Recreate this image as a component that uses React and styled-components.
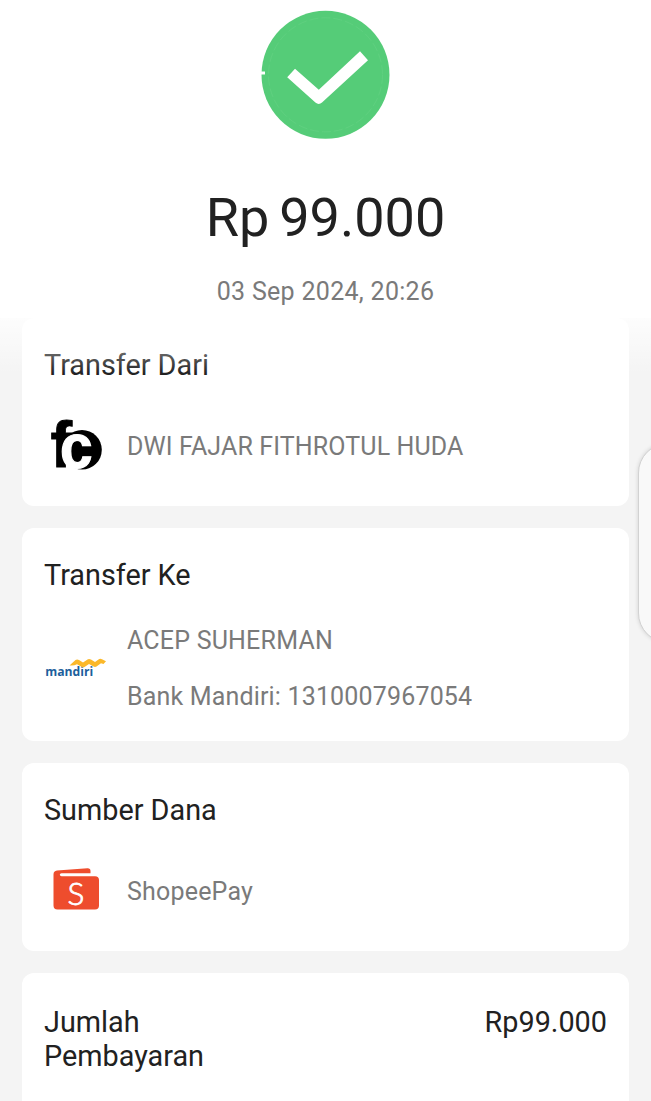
import React from 'react';
import styled, { createGlobalStyle } from 'styled-components';

const GlobalStyle = createGlobalStyle`
  body {
    margin: 0;
    background: #f4f4f4;
    font-family: Roboto, 'Liberation Sans', sans-serif;
  }
  * {
    box-sizing: border-box;
  }
`;

const Page = styled.div`
  position: relative;
  height: 1101px;
  overflow: hidden;
  background: #f4f4f4;
`;

const Header = styled.header`
  display: flex;
  flex-direction: column;
  align-items: center;
  height: 318px;
  padding-top: 10px;
  background: #fff;
`;

const Amount = styled.h1`
  margin: 46px 0 0;
  font-size: 54px;
  font-weight: 400;
  line-height: 64px;
  word-spacing: -3.5px;
  color: #212121;
  white-space: nowrap;
`;

const DateText = styled.div`
  margin-top: 27px;
  font-size: 25px;
  line-height: 30px;
  letter-spacing: 0.3px;
  color: #7a7a7a;
`;

const Cards = styled.main`
  display: flex;
  flex-direction: column;
  gap: 22px;
  padding: 0 22px;
`;

const Card = styled.section`
  height: ${(props) => props.$height}px;
  padding: 30px 22px 0;
  border-radius: 12px;
  background: #fff;
`;

const Title = styled.h2`
  margin: 0;
  font-size: 28.8px;
  font-weight: 400;
  line-height: 34px;
  color: #212121;
`;

const Row = styled.div`
  display: flex;
  align-items: center;
  gap: 19px;
  height: ${(props) => props.$height}px;
  margin-top: ${(props) => props.$top}px;
`;

const Logo = styled.svg`
  display: block;
  flex: none;
  width: 64px;
  height: 64px;
  overflow: visible;
`;

const Lines = styled.div`
  display: flex;
  flex-direction: column;
  gap: 26px;
  padding-top: ${(props) => props.$top}px;
`;

const Line = styled.div`
  font-size: 25px;
  line-height: 30px;
  letter-spacing: ${(props) => props.$spacing || 0.12}px;
  color: #7a7a7a;
  white-space: nowrap;
`;

const Total = styled.div`
  display: flex;
  justify-content: space-between;
  margin-top: 2px;
`;

const TotalLabel = styled(Title)`
  width: 200px;
`;

const Fade = styled.div`
  position: absolute;
  top: 306px;
  left: 0;
  right: 0;
  height: 68px;
  background: linear-gradient(#fff, rgba(255, 255, 255, 0));
  pointer-events: none;
`;

const EdgeHandle = styled.div`
  position: absolute;
  top: 443px;
  left: 638px;
  width: 60px;
  height: 200px;
  border: 1px solid #d2d2d2;
  border-radius: 30px;
  background: #f9f9f9;
  box-shadow: 0 0 4px rgba(0, 0, 0, 0.14);
`;

const SuccessIcon = () => (
  <svg width="131" height="130" viewBox="260 10 131 130">
    <circle cx="325.5" cy="74.8" r="64" fill="#55cc78" />
    <circle cx="325.5" cy="74.8" r="57" fill="none" stroke="#68d287" strokeWidth="0.5" strokeDasharray="9 3" />
    <path d="M261 71.5H265V74.5H261Z" fill="#fff" />
    <path
      d="M287.2 77.3L295 68.8L318.8 89.8L360 51.2L368 60.3L322 102.6Q318.8 105.4 315.4 102.6Z"
      fill="#fff"
    />
  </svg>
);

const FcLogo = () => (
  <Logo viewBox="44 413 64 64">
    <text x="50.5" y="467" fontFamily="Liberation Sans, sans-serif" fontWeight="700" fontSize="65" stroke="#000" strokeWidth="0.8">f</text>
    <circle cx="82" cy="449.8" r="19.8" />
    <text
      transform="translate(59.9 467.9) scale(0.93 1)"
      fontFamily="Liberation Sans, sans-serif"
      fontWeight="700"
      fontSize="63"
      fill="#fff"
      stroke="#fff"
      strokeWidth="1.2"
    >
      c
    </text>
  </Logo>
);

const MandiriLogo = () => (
  <Logo viewBox="44 636 64 64">
    <text
      x="45.3"
      y="675.8"
      textLength="48"
      lengthAdjust="spacingAndGlyphs"
      fontFamily="Open Sans, sans-serif"
      fontWeight="700"
      fontSize="13"
      fill="#1d5f9c"
    >
      mandiri
    </text>
    <path
      d="M69.5 665.5L75.5 660Q77 658.8 79 660L83 662.4L87.5 659.5Q89 658.5 91 659.6L95 662L98.5 659.4Q100 658.4 102 659.2L106 661.3L103.5 664L101 663.2L96.5 666.5Q95 667.5 93 666.3L89 664L84.5 666.9Q83 667.8 81.5 666.8L77 664.2Q74 666 69.5 665.5Z"
      fill="#fbb829"
    />
  </Logo>
);

const ShopeePayLogo = () => (
  <Logo viewBox="44 858 64 64">
    <path
      d="M57 870.6L87.5 868.3Q90.5 868.2 90.5 871V873.2H61.5Q59.8 873.6 59.8 874.8Q60 876.2 61.5 876.2H95Q99 876.2 99 880V905.5Q99 909.4 95 909.4H57.5Q53.5 909.4 53.5 905.5V874.5Q53.5 871 57 870.6Z"
      fill="#ee4d2d"
    />
    <text
      x="76"
      y="904.6"
      textAnchor="middle"
      fontFamily="Lato, sans-serif"
      fontWeight="300"
      fontSize="31.5"
      fill="#fff"
      stroke="#fff"
      strokeWidth="0.8"
    >
      S
    </text>
  </Logo>
);

const App = () => {
  return (
    <Page>
      <GlobalStyle />
      <Header>
        <SuccessIcon />
        <Amount>Rp 99.000</Amount>
        <DateText>03 Sep 2024, 20:26</DateText>
      </Header>
      <Cards>
        <Card $height={188}>
          <Title>Transfer Dari</Title>
          <Row $height={64} $top={31}>
            <FcLogo />
            <Lines $top={3}>
              <Line>DWI FAJAR FITHROTUL HUDA</Line>
            </Lines>
          </Row>
        </Card>
        <Card $height={213}>
          <Title>Transfer Ke</Title>
          <Row $height={86} $top={33}>
            <MandiriLogo />
            <Lines $top={2}>
              <Line $spacing={0.2}>ACEP SUHERMAN</Line>
              <Line $spacing={0.17}>Bank Mandiri: 1310007967054</Line>
            </Lines>
          </Row>
        </Card>
        <Card $height={188}>
          <Title>Sumber Dana</Title>
          <Row $height={64} $top={31}>
            <ShopeePayLogo />
            <Lines $top={3}>
              <Line $spacing={0.2}>ShopeePay</Line>
            </Lines>
          </Row>
        </Card>
        <Card $height={188}>
          <Total>
            <TotalLabel>Jumlah Pembayaran</TotalLabel>
            <Title as="div">Rp99.000</Title>
          </Total>
        </Card>
      </Cards>
      <Fade />
      <EdgeHandle />
    </Page>
  );
};

export default App;
